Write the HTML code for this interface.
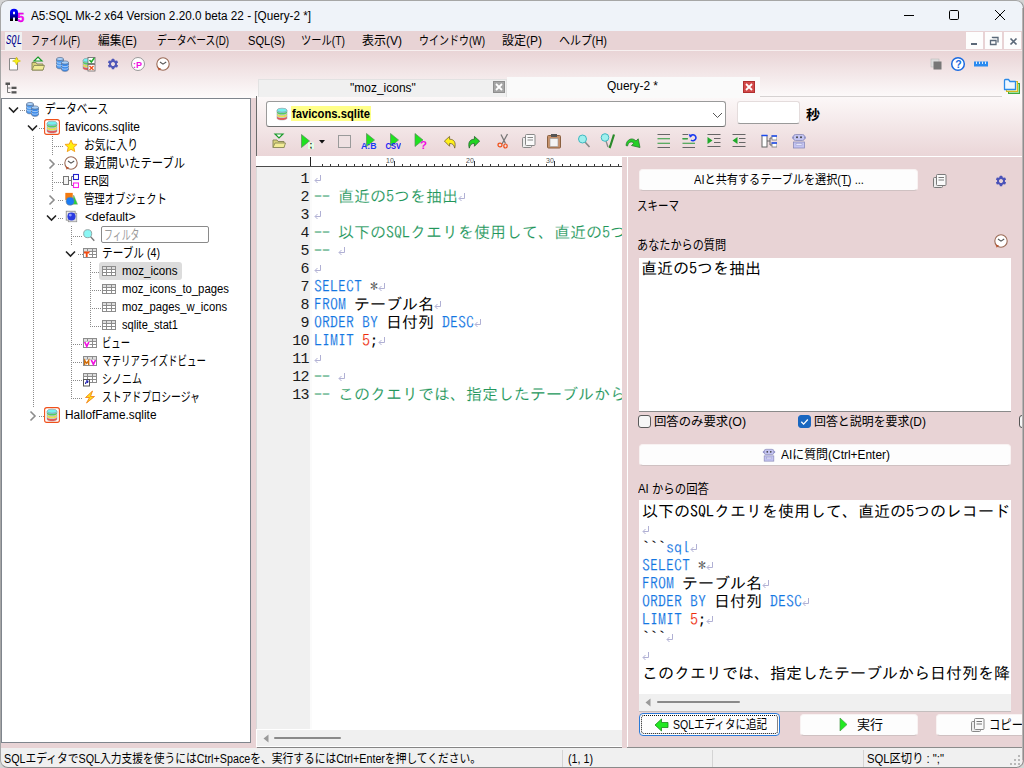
<!DOCTYPE html>
<html lang="ja">
<head>
<meta charset="utf-8">
<title>A5:SQL Mk-2</title>
<style>
*{box-sizing:border-box;margin:0;padding:0}
html,body{width:1024px;height:768px;overflow:hidden;background:#e8d3d5}
body{font-family:"Liberation Sans","Noto Sans CJK JP",sans-serif;font-size:12px;color:#000;position:relative}
#app{position:absolute;left:0;top:0;width:1024px;height:768px;overflow:hidden;background:#e8d3d5}
#app div,#app svg{position:absolute}
.t{white-space:pre;transform-origin:0 50%}
.mono{font-family:"IPAGothic","Liberation Mono",monospace}
.mono span{position:static}
#app svg.r{position:static;display:inline-block;vertical-align:top}
.mono .c,.mono .k,.mono .n{-webkit-text-stroke:0.12px #fff}
.dv{width:1px;background-image:linear-gradient(#8a8a8a 50%,transparent 50%);background-size:1px 2px}
.dh{height:1px;background-image:linear-gradient(90deg,#8a8a8a 50%,transparent 50%);background-size:2px 1px}
.c{color:#22965a}.k{color:#1476e2}.n{color:#ee2c0c}.g{color:#555}
.btn{background:#fdfdfd;border:1px solid #f8f2f2;border-bottom-color:#cfc1c2;border-radius:4px}
.ln{left:257px;width:52px;text-align:right;font-family:"Liberation Mono",monospace;font-size:15px;letter-spacing:-0.6px;line-height:18px;height:18px;color:#1a1a1a;white-space:nowrap}

</style>
</head>
<body>
<div id="app">
<div style="left:0px;top:0px;width:1024px;height:31px;background:#eff3f9"></div>
<svg style="left:8px;top:6px" width="18" height="18" viewBox="0 0 18 18"><linearGradient id="a5g" x1="0" y1="0" x2="0" y2="1"><stop offset="0" stop-color="#0000ff"/><stop offset="0.35" stop-color="#0000e8"/><stop offset="0.75" stop-color="#000070"/><stop offset="0.88" stop-color="#000"/></linearGradient><path fill-rule="evenodd" d="M2 15V6.2Q2 2.7 6 2.7Q10 2.7 10 6.2V15H7V11.5H5V15ZM5 5.8H7V8.3H5Z" fill="url(#a5g)"/><text x="9.3" y="15.8" font-family="Liberation Sans,sans-serif" font-weight="bold" font-size="12.5" fill="#ff00ff" stroke="#c000c0" stroke-width="0.3">5</text></svg>
<div class="t" style="left:31px;top:6.5px;font-size:12px;line-height:18px;height:18px;transform:scaleX(0.978);">A5:SQL Mk-2 x64 Version 2.20.0 beta 22 - [Query-2 *]</div>
<svg style="left:903px;top:10px" width="12" height="12" viewBox="0 0 12 12"><path d="M1 5.5h10" stroke="#000" stroke-width="1" fill="none"/></svg>
<svg style="left:948px;top:9px" width="12" height="12" viewBox="0 0 12 12"><rect x="1.5" y="1.5" width="9" height="9" rx="1.2" stroke="#000" stroke-width="1" fill="none"/></svg>
<svg style="left:994px;top:9px" width="12" height="12" viewBox="0 0 12 12"><path d="M1 1l10 10M11 1L1 11" stroke="#000" stroke-width="1" fill="none"/></svg>
<div style="left:0px;top:31px;width:1024px;height:20px;background:#e8d3d5"></div>
<div style="left:5px;top:32px;width:17px;height:18px;background:#f0f0f0"></div>
<div class="t" style="left:5.5px;top:32px;font-size:12.5px;line-height:18px;height:18px;font-family:'Liberation Mono',monospace;transform:scaleX(0.711);font-style:italic;color:#00008c;">SQL</div>
<div class="t" style="left:31px;top:31.5px;font-size:12.5px;line-height:18px;height:18px;transform:scaleX(0.743);">ファイル(F)</div>
<div class="t" style="left:98px;top:31.5px;font-size:12.5px;line-height:18px;height:18px;transform:scaleX(0.936);">編集(E)</div>
<div class="t" style="left:157px;top:31.5px;font-size:12.5px;line-height:18px;height:18px;transform:scaleX(0.785);">データベース(D)</div>
<div class="t" style="left:248px;top:31.5px;font-size:12.5px;line-height:18px;height:18px;transform:scaleX(0.888);">SQL(S)</div>
<div class="t" style="left:301px;top:31.5px;font-size:12.5px;line-height:18px;height:18px;transform:scaleX(0.823);">ツール(T)</div>
<div class="t" style="left:362px;top:31.5px;font-size:12.5px;line-height:18px;height:18px;transform:scaleX(0.960);">表示(V)</div>
<div class="t" style="left:419px;top:31.5px;font-size:12.5px;line-height:18px;height:18px;transform:scaleX(0.799);">ウインドウ(W)</div>
<div class="t" style="left:502px;top:31.5px;font-size:12.5px;line-height:18px;height:18px;transform:scaleX(0.960);">設定(P)</div>
<div class="t" style="left:559px;top:31.5px;font-size:12.5px;line-height:18px;height:18px;transform:scaleX(0.875);">ヘルプ(H)</div>
<div style="left:966px;top:32px;width:17px;height:17px;background:#fdfdfd"></div>
<div style="left:985px;top:32px;width:17px;height:17px;background:#fdfdfd"></div>
<div style="left:1004px;top:32px;width:17px;height:17px;background:#fdfdfd"></div>
<svg style="left:966px;top:32px" width="56" height="17" viewBox="0 0 56 17"><path d="M5 12h6" stroke="#5a6878" stroke-width="2" fill="none"/><path d="M24.5 8.5h5.5v4h-5.5z" stroke="#5a6878" stroke-width="1.3" fill="none"/><path d="M26.5 6v-.500h5.5v5" stroke="#5a6878" stroke-width="1.3" fill="none"/><path d="M44.5 6.5l6 6M50.5 6.5l-6 6" stroke="#5a6878" stroke-width="1.7" fill="none"/></svg>
<div style="left:0px;top:50px;width:1024px;height:1px;background:#f7f0f0"></div>
<div style="left:0px;top:51px;width:1024px;height:47px;background:linear-gradient(#e9d4d6,#fdfbfb)"></div>
<svg style="left:6px;top:56px" width="16" height="16" viewBox="0 0 16 16"><path d="M3.5 2.5h8v11.5h-8z" fill="#fff" stroke="#888" stroke-width="1"/><path d="M10.5 1l1.2 2.8 2.8 1.2-2.8 1.2-1.2 2.8-1.2-2.8L6.5 5l2.8-1.2z" fill="#f6f01a" stroke="#c8b400" stroke-width="0.5"/></svg>
<svg style="left:30px;top:56px" width="16" height="16" viewBox="0 0 16 16"><path d="M8 1l4 4H4z" fill="#fff" stroke="#1a9a2a" stroke-width="1.2"/><path d="M2 14V6.5h4l1 1.5h6V14z" fill="#d8d27a" stroke="#8a8a5a" stroke-width="1"/><path d="M2 14l2-4.5h10.5L13 14z" fill="#f2ec96" stroke="#8a8a5a" stroke-width="0.9"/></svg>
<svg style="left:55px;top:56px" width="16" height="16" viewBox="0 0 16 16"><g stroke="#5a6f8f" stroke-width="0.7"><path d="M1.5 3v8c0 2.4 7 2.4 7 0V3" fill="#4f9bf0"/><ellipse cx="5" cy="3" rx="3.5" ry="1.6" fill="#a9d1fa"/><path d="M1.5 5.6c0 2.2 7 2.2 7 0M1.5 8.3c0 2.2 7 2.2 7 0" fill="none" stroke="#d6e8fb"/><path d="M6.5 6.5v7c0 2.4 7 2.4 7 0v-7" fill="#3d8bea"/><ellipse cx="10" cy="6.5" rx="3.5" ry="1.6" fill="#a9d1fa"/><path d="M6.5 9c0 2.2 7 2.2 7 0M6.5 11.5c0 2.2 7 2.2 7 0" fill="none" stroke="#d6e8fb"/></g></svg>
<svg style="left:80px;top:56px" width="16" height="16" viewBox="0 0 16 16"><path d="M3 10.3v1.9c0 2.4 10 2.4 10 0v-1.9c0 2.4-10 2.4-10 0z" fill="#f4484a" stroke="#9aa0a4" stroke-width="0.5"/><path d="M3 7.6v1.9c0 2.4 10 2.4 10 0v-1.9c0 2.4-10 2.4-10 0z" fill="#f6ee3c" stroke="#9aa0a4" stroke-width="0.5"/><path d="M3 4.9v1.9c0 2.4 10 2.4 10 0v-1.9c0 2.4-10 2.4-10 0z" fill="#3fdc4c" stroke="#9aa0a4" stroke-width="0.5"/><path d="M3 4.3v.800c0 2.4 10 2.4 10 0v-.800z" fill="#5fe6e6" stroke="#9aa0a4" stroke-width="0.5"/><ellipse cx="8" cy="4.2" rx="5" ry="2" fill="#74f0f0" stroke="#8a9298" stroke-width="0.6"/><rect x="8" y="1.5" width="7" height="6" fill="#fff" stroke="#666" stroke-width="0.8"/><path d="M9.5 4l1.8 2 3-4" stroke="#1faa2a" stroke-width="1.5" fill="none"/><rect x="8" y="8.5" width="7" height="6.5" fill="#fff" stroke="#666" stroke-width="0.8"/><path d="M9.5 10l4 4M13.5 10l-4 4" stroke="#f0501a" stroke-width="1.3"/></svg>
<svg style="left:107px;top:58px" width="12" height="12" viewBox="0 0 16 16"><g transform="translate(8 8)"><rect x="-1.7" y="-7" width="3.4" height="4" rx="0.5" fill="#5058b8" transform="rotate(0)"/><rect x="-1.7" y="-7" width="3.4" height="4" rx="0.5" fill="#5058b8" transform="rotate(60)"/><rect x="-1.7" y="-7" width="3.4" height="4" rx="0.5" fill="#5058b8" transform="rotate(120)"/><rect x="-1.7" y="-7" width="3.4" height="4" rx="0.5" fill="#5058b8" transform="rotate(180)"/><rect x="-1.7" y="-7" width="3.4" height="4" rx="0.5" fill="#5058b8" transform="rotate(240)"/><rect x="-1.7" y="-7" width="3.4" height="4" rx="0.5" fill="#5058b8" transform="rotate(300)"/><circle r="4" fill="none" stroke="#5058b8" stroke-width="2.6"/></g></svg>
<svg style="left:130px;top:56px" width="16" height="16" viewBox="0 0 16 16"><circle cx="8" cy="8" r="6.5" fill="#fff" stroke="#999" stroke-width="1"/><text x="3" y="11.5" font-family="Liberation Sans,sans-serif" font-weight="bold" font-size="9" fill="#f010e0">:P</text></svg>
<svg style="left:155px;top:56px" width="16" height="16" viewBox="0 0 16 16"><circle cx="8" cy="8" r="6.2" fill="#fff" stroke="#9a6a55" stroke-width="1.1"/><path d="M5 6l3 2.2 3.2-2.2" fill="none" stroke="#555" stroke-width="1.1"/><path d="M2.5 11.5l1.2 3.3 2.3-2.3z" fill="#b5522c"/></svg>
<svg style="left:928px;top:56px" width="16" height="16" viewBox="0 0 16 16"><rect x="3" y="3" width="8" height="8" fill="#ddd" stroke="#bbb" stroke-width="0.6"/><rect x="5.5" y="5.5" width="8" height="8" fill="#777"/></svg>
<svg style="left:950px;top:56px" width="16" height="16" viewBox="0 0 16 16"><circle cx="8" cy="8" r="6.3" fill="#fff" stroke="#1a6ae0" stroke-width="1.5"/><text x="5.2" y="12" font-family="Liberation Sans,sans-serif" font-weight="bold" font-size="10.5" fill="#1a6ae0">?</text></svg>
<svg style="left:973px;top:56px" width="16" height="16" viewBox="0 0 16 16"><rect x="1" y="5.5" width="14" height="5" fill="#2a8af0"/><path d="M3.5 5.5v2.5M6.5 5.5v2.5M9.5 5.5v2.5M12.5 5.5v2.5" stroke="#d8ecff" stroke-width="1"/></svg>
<svg style="left:5px;top:82px" width="12" height="12" viewBox="0 0 12 12"><rect x="0.5" y="0.5" width="4.5" height="2.5" fill="#555"/><path d="M2.5 3v7.5h3M2.5 6h3" stroke="#777" stroke-width="1" fill="none"/><rect x="6.5" y="4.7" width="5" height="2.3" fill="#555"/><rect x="6.5" y="9.2" width="5" height="2.3" fill="#555"/></svg>
<div style="left:1px;top:98px;width:250px;height:645px;background:#fff;border:1px solid #7f858d"></div>
<div class="dv" style="left:33px;top:118px;height:290px"></div>
<div class="dv" style="left:52px;top:136px;height:75px"></div>
<div class="dv" style="left:71px;top:226px;height:172px"></div>
<div class="dv" style="left:90px;top:262px;height:64px"></div>
<div class="dh" style="left:20px;top:110px;width:5px"></div>
<div class="dh" style="left:39px;top:128px;width:5px"></div>
<div class="dh" style="left:39px;top:416px;width:5px"></div>
<div class="dh" style="left:52px;top:146px;width:11px"></div>
<div class="dh" style="left:58px;top:164px;width:5px"></div>
<div class="dh" style="left:52px;top:182px;width:11px"></div>
<div class="dh" style="left:58px;top:200px;width:5px"></div>
<div class="dh" style="left:58px;top:218px;width:5px"></div>
<div class="dh" style="left:71px;top:236px;width:12px"></div>
<div class="dh" style="left:78px;top:254px;width:5px"></div>
<div class="dh" style="left:90px;top:272px;width:11px"></div>
<div class="dh" style="left:90px;top:290px;width:11px"></div>
<div class="dh" style="left:90px;top:308px;width:11px"></div>
<div class="dh" style="left:90px;top:326px;width:11px"></div>
<div class="dh" style="left:71px;top:344px;width:12px"></div>
<div class="dh" style="left:71px;top:362px;width:12px"></div>
<div class="dh" style="left:71px;top:380px;width:12px"></div>
<div class="dh" style="left:71px;top:398px;width:12px"></div>
<svg style="left:8px;top:101.5px" width="11" height="15" viewBox="0 0 11 15"><rect width="11" height="15" fill="#fff"/><path d="M1 5.5l4.5 4.5 4.5-4.5" fill="none" stroke="#222" stroke-width="1.6"/></svg>
<svg style="left:27px;top:119.5px" width="11" height="15" viewBox="0 0 11 15"><rect width="11" height="15" fill="#fff"/><path d="M1 5.5l4.5 4.5 4.5-4.5" fill="none" stroke="#222" stroke-width="1.6"/></svg>
<svg style="left:48px;top:155.5px" width="9" height="16" viewBox="0 0 9 16"><rect width="9" height="16" fill="#fff"/><path d="M1.5 3.5l4.5 4.5-4.5 4.5" fill="none" stroke="#8c8c8c" stroke-width="1.6"/></svg>
<svg style="left:48px;top:191.5px" width="9" height="16" viewBox="0 0 9 16"><rect width="9" height="16" fill="#fff"/><path d="M1.5 3.5l4.5 4.5-4.5 4.5" fill="none" stroke="#8c8c8c" stroke-width="1.6"/></svg>
<svg style="left:46px;top:209.5px" width="11" height="15" viewBox="0 0 11 15"><rect width="11" height="15" fill="#fff"/><path d="M1 5.5l4.5 4.5 4.5-4.5" fill="none" stroke="#222" stroke-width="1.6"/></svg>
<svg style="left:65px;top:245.5px" width="11" height="15" viewBox="0 0 11 15"><rect width="11" height="15" fill="#fff"/><path d="M1 5.5l4.5 4.5 4.5-4.5" fill="none" stroke="#222" stroke-width="1.6"/></svg>
<svg style="left:29px;top:407.5px" width="9" height="16" viewBox="0 0 9 16"><rect width="9" height="16" fill="#fff"/><path d="M1.5 3.5l4.5 4.5-4.5 4.5" fill="none" stroke="#8c8c8c" stroke-width="1.6"/></svg>
<div style="left:99px;top:262px;width:83px;height:18px;background:#dcdcdc;border-radius:3px"></div>
<svg style="left:25px;top:101px" width="16" height="16" viewBox="0 0 16 16"><g stroke="#5a6f8f" stroke-width="0.7"><path d="M1.5 3v8c0 2.4 7 2.4 7 0V3" fill="#4f9bf0"/><ellipse cx="5" cy="3" rx="3.5" ry="1.6" fill="#a9d1fa"/><path d="M1.5 5.6c0 2.2 7 2.2 7 0M1.5 8.3c0 2.2 7 2.2 7 0" fill="none" stroke="#d6e8fb"/><path d="M6.5 6.5v7c0 2.4 7 2.4 7 0v-7" fill="#3d8bea"/><ellipse cx="10" cy="6.5" rx="3.5" ry="1.6" fill="#a9d1fa"/><path d="M6.5 9c0 2.2 7 2.2 7 0M6.5 11.5c0 2.2 7 2.2 7 0" fill="none" stroke="#d6e8fb"/></g></svg>
<svg style="left:44px;top:119px" width="16" height="16" viewBox="0 0 16 16"><rect x="0.6" y="0.6" width="14.8" height="14.8" rx="2.2" fill="#fff" stroke="#f0501a" stroke-width="1.1"/><path d="M3 10.3v1.9c0 2.4 10 2.4 10 0v-1.9c0 2.4-10 2.4-10 0z" fill="#f4484a" stroke="#9aa0a4" stroke-width="0.5"/><path d="M3 7.6v1.9c0 2.4 10 2.4 10 0v-1.9c0 2.4-10 2.4-10 0z" fill="#f6ee3c" stroke="#9aa0a4" stroke-width="0.5"/><path d="M3 4.9v1.9c0 2.4 10 2.4 10 0v-1.9c0 2.4-10 2.4-10 0z" fill="#3fdc4c" stroke="#9aa0a4" stroke-width="0.5"/><path d="M3 4.3v.800c0 2.4 10 2.4 10 0v-.800z" fill="#5fe6e6" stroke="#9aa0a4" stroke-width="0.5"/><ellipse cx="8" cy="4.2" rx="5" ry="2" fill="#74f0f0" stroke="#8a9298" stroke-width="0.6"/></svg>
<svg style="left:64px;top:138.5px" width="14" height="14" viewBox="0 0 16 16"><path d="M8 1.2l2 4.6 4.9.4-3.7 3.3 1.1 4.9L8 11.8l-4.3 2.6 1.1-4.9L1.1 6.2l4.9-.4z" fill="#ffee10" stroke="#f59a12" stroke-width="1"/></svg>
<svg style="left:63px;top:155px" width="16" height="16" viewBox="0 0 16 16"><circle cx="8" cy="8" r="6.2" fill="#fff" stroke="#9a6a55" stroke-width="1.1"/><path d="M5 6l3 2.2 3.2-2.2" fill="none" stroke="#555" stroke-width="1.1"/><path d="M2.5 11.5l1.2 3.3 2.3-2.3z" fill="#b5522c"/></svg>
<svg style="left:63px;top:173px" width="16" height="16" viewBox="0 0 16 16"><rect x="0.5" y="3.5" width="5" height="8" fill="#f4f4f4" stroke="#777" stroke-width="1"/><path d="M5.5 7.5h3M8.5 3.5v9M8.5 3.5h2M8.5 12.5h2" stroke="#777" fill="none" stroke-width="1"/><rect x="10.5" y="1.5" width="5" height="5" fill="#fff" stroke="#2222cc" stroke-width="1.1"/><rect x="10.5" y="10" width="5" height="4.5" fill="#fff" stroke="#ff22ee" stroke-width="1.1"/></svg>
<svg style="left:64px;top:192px" width="14" height="14" viewBox="0 0 16 16"><rect x="1.5" y="1" width="8.5" height="8" fill="#f47a10"/><path d="M11 3.5l4.5 10.5h-6z" fill="#22dd33" stroke="#8a8a8a" stroke-width="0.5"/><circle cx="7" cy="10.5" r="4.6" fill="#1a7cf4" stroke="#7a8088" stroke-width="0.7"/></svg>
<svg style="left:64.5px;top:210px" width="13" height="13" viewBox="0 0 16 16"><rect x="1.5" y="1.5" width="11" height="11" fill="#eee" stroke="#888" stroke-width="1"/><rect x="4" y="4" width="10.5" height="10.5" fill="#ddd" stroke="#888" stroke-width="0.8"/><circle cx="8" cy="8" r="5" fill="#2a3be0"/><circle cx="6.5" cy="6.3" r="1.8" fill="#8f9bff"/></svg>
<svg style="left:82px;top:228px" width="14" height="14" viewBox="0 0 16 16"><path d="M9 9l5 5.5" stroke="#777" stroke-width="1.6"/><circle cx="6.5" cy="6.5" r="4.6" fill="#8af6f4" stroke="#8a9a9a" stroke-width="1"/></svg>
<div style="left:101px;top:226px;width:108px;height:17px;background:#fff;border:1px solid #8a8a8a;border-radius:2px"></div>
<svg style="left:82px;top:245px" width="16" height="16" viewBox="0 0 16 16"><rect x="1.5" y="3.5" width="13" height="9" fill="#fff" stroke="#8c8c8c" stroke-width="1"/><rect x="2" y="4" width="12" height="2.5" fill="#dedede"/><path d="M1.5 6.5h13" stroke="#8c8c8c" stroke-width="1"/><path d="M1.5 9.5h13" stroke="#8c8c8c" stroke-width="1"/><path d="M5.5 3.5v9" stroke="#8c8c8c" stroke-width="1"/><path d="M10.5 3.5v9" stroke="#8c8c8c" stroke-width="1"/><rect x="2" y="6.5" width="5" height="5.5" fill="#fff"/><path d="M2 7.5h5.5M4.7 7.5v4.5" stroke="#f24a10" stroke-width="1.9"/></svg>
<svg style="left:101px;top:263px" width="16" height="16" viewBox="0 0 16 16"><rect x="1.5" y="3.5" width="13" height="9" fill="#fff" stroke="#8c8c8c" stroke-width="1"/><rect x="2" y="4" width="12" height="2.5" fill="#dedede"/><path d="M1.5 6.5h13" stroke="#8c8c8c" stroke-width="1"/><path d="M1.5 9.5h13" stroke="#8c8c8c" stroke-width="1"/><path d="M5.5 3.5v9" stroke="#8c8c8c" stroke-width="1"/><path d="M10.5 3.5v9" stroke="#8c8c8c" stroke-width="1"/></svg>
<svg style="left:101px;top:281px" width="16" height="16" viewBox="0 0 16 16"><rect x="1.5" y="3.5" width="13" height="9" fill="#fff" stroke="#8c8c8c" stroke-width="1"/><rect x="2" y="4" width="12" height="2.5" fill="#dedede"/><path d="M1.5 6.5h13" stroke="#8c8c8c" stroke-width="1"/><path d="M1.5 9.5h13" stroke="#8c8c8c" stroke-width="1"/><path d="M5.5 3.5v9" stroke="#8c8c8c" stroke-width="1"/><path d="M10.5 3.5v9" stroke="#8c8c8c" stroke-width="1"/></svg>
<svg style="left:101px;top:299px" width="16" height="16" viewBox="0 0 16 16"><rect x="1.5" y="3.5" width="13" height="9" fill="#fff" stroke="#8c8c8c" stroke-width="1"/><rect x="2" y="4" width="12" height="2.5" fill="#dedede"/><path d="M1.5 6.5h13" stroke="#8c8c8c" stroke-width="1"/><path d="M1.5 9.5h13" stroke="#8c8c8c" stroke-width="1"/><path d="M5.5 3.5v9" stroke="#8c8c8c" stroke-width="1"/><path d="M10.5 3.5v9" stroke="#8c8c8c" stroke-width="1"/></svg>
<svg style="left:101px;top:317px" width="16" height="16" viewBox="0 0 16 16"><rect x="1.5" y="3.5" width="13" height="9" fill="#fff" stroke="#8c8c8c" stroke-width="1"/><rect x="2" y="4" width="12" height="2.5" fill="#dedede"/><path d="M1.5 6.5h13" stroke="#8c8c8c" stroke-width="1"/><path d="M1.5 9.5h13" stroke="#8c8c8c" stroke-width="1"/><path d="M5.5 3.5v9" stroke="#8c8c8c" stroke-width="1"/><path d="M10.5 3.5v9" stroke="#8c8c8c" stroke-width="1"/></svg>
<svg style="left:82px;top:335px" width="16" height="16" viewBox="0 0 16 16"><rect x="1.5" y="3.5" width="13" height="9" fill="#fff" stroke="#8c8c8c" stroke-width="1"/><rect x="2" y="4" width="12" height="2.5" fill="#dedede"/><path d="M1.5 6.5h13" stroke="#8c8c8c" stroke-width="1"/><path d="M1.5 9.5h13" stroke="#8c8c8c" stroke-width="1"/><path d="M5.5 3.5v9" stroke="#8c8c8c" stroke-width="1"/><path d="M10.5 3.5v9" stroke="#8c8c8c" stroke-width="1"/><rect x="2" y="6.5" width="5.5" height="5.5" fill="#fff"/><path d="M2.7 7l2.1 4.3L6.9 7" stroke="#f010e0" stroke-width="1.7" fill="none"/></svg>
<svg style="left:82px;top:353px" width="16" height="16" viewBox="0 0 16 16"><rect x="1.5" y="3.5" width="13" height="9" fill="#fff" stroke="#8c8c8c" stroke-width="1"/><rect x="2" y="4" width="12" height="2.5" fill="#dedede"/><path d="M1.5 6.5h13" stroke="#8c8c8c" stroke-width="1"/><path d="M1.5 9.5h13" stroke="#8c8c8c" stroke-width="1"/><path d="M5.5 3.5v9" stroke="#8c8c8c" stroke-width="1"/><path d="M10.5 3.5v9" stroke="#8c8c8c" stroke-width="1"/><rect x="2" y="6.5" width="12" height="5.5" fill="#fff"/><path d="M2.7 12V7.5l2 2.8 2-2.8V12" stroke="#d07010" stroke-width="1.4" fill="none"/><path d="M9.3 7l2.1 4.3L13.5 7" stroke="#f010e0" stroke-width="1.7" fill="none"/></svg>
<svg style="left:82px;top:371px" width="16" height="16" viewBox="0 0 16 16"><rect x="1.5" y="2.5" width="13" height="9" fill="#fff" stroke="#8c8c8c" stroke-width="1"/><rect x="2" y="3" width="12" height="2.5" fill="#dedede"/><path d="M1.5 5.5h13" stroke="#8c8c8c" stroke-width="1"/><path d="M1.5 8.5h13" stroke="#8c8c8c" stroke-width="1"/><path d="M5.5 2.5v9" stroke="#8c8c8c" stroke-width="1"/><path d="M10.5 2.5v9" stroke="#8c8c8c" stroke-width="1"/><rect x="1.5" y="8.5" width="6" height="6.5" fill="#fff" stroke="#555" stroke-width="1"/><path d="M3.5 13c0-2 1-2.5 2.5-2.5M6.3 10.3l-2-.8M6.3 10.3l-1 1.8" stroke="#2020b0" stroke-width="1.1" fill="none"/></svg>
<svg style="left:82px;top:389px" width="16" height="16" viewBox="0 0 16 16"><path d="M10.5 2L3.5 8.5h4L4.5 14l8-6.5h-4z" fill="#ffdc1a" stroke="#f0780c" stroke-width="0.8"/></svg>
<svg style="left:44px;top:407px" width="16" height="16" viewBox="0 0 16 16"><rect x="0.6" y="0.6" width="14.8" height="14.8" rx="2.2" fill="#fff" stroke="#f0501a" stroke-width="1.1"/><path d="M3 10.3v1.9c0 2.4 10 2.4 10 0v-1.9c0 2.4-10 2.4-10 0z" fill="#f4484a" stroke="#9aa0a4" stroke-width="0.5"/><path d="M3 7.6v1.9c0 2.4 10 2.4 10 0v-1.9c0 2.4-10 2.4-10 0z" fill="#f6ee3c" stroke="#9aa0a4" stroke-width="0.5"/><path d="M3 4.9v1.9c0 2.4 10 2.4 10 0v-1.9c0 2.4-10 2.4-10 0z" fill="#3fdc4c" stroke="#9aa0a4" stroke-width="0.5"/><path d="M3 4.3v.800c0 2.4 10 2.4 10 0v-.800z" fill="#5fe6e6" stroke="#9aa0a4" stroke-width="0.5"/><ellipse cx="8" cy="4.2" rx="5" ry="2" fill="#74f0f0" stroke="#8a9298" stroke-width="0.6"/></svg>
<div class="t" style="left:45.3px;top:99.5px;font-size:13px;line-height:18px;height:18px;transform:scaleX(0.814);">データベース</div>
<div class="t" style="left:65.3px;top:117.5px;font-size:12px;line-height:18px;height:18px;transform:scaleX(0.995);">favicons.sqlite</div>
<div class="t" style="left:84.3px;top:135.5px;font-size:13px;line-height:18px;height:18px;transform:scaleX(0.831);">お気に入り</div>
<div class="t" style="left:84.3px;top:153.5px;font-size:13px;line-height:18px;height:18px;transform:scaleX(0.869);">最近開いたテーブル</div>
<div class="t" style="left:84.3px;top:171.5px;font-size:13px;line-height:18px;height:18px;transform:scaleX(0.805);">ER図</div>
<div class="t" style="left:84.3px;top:189.5px;font-size:13px;line-height:18px;height:18px;transform:scaleX(0.798);">管理オブジェクト</div>
<div class="t" style="left:84.8px;top:207.5px;font-size:12px;line-height:18px;height:18px;transform:scaleX(1.009);">&lt;default&gt;</div>
<div class="t" style="left:102.3px;top:243.5px;font-size:13px;line-height:18px;height:18px;transform:scaleX(0.820);">テーブル (4)</div>
<div class="t" style="left:122.3px;top:261.5px;font-size:12px;line-height:18px;height:18px;transform:scaleX(0.968);">moz_icons</div>
<div class="t" style="left:122.3px;top:279.5px;font-size:12px;line-height:18px;height:18px;transform:scaleX(0.943);">moz_icons_to_pages</div>
<div class="t" style="left:122.3px;top:297.5px;font-size:12px;line-height:18px;height:18px;transform:scaleX(0.937);">moz_pages_w_icons</div>
<div class="t" style="left:122.3px;top:315.5px;font-size:12px;line-height:18px;height:18px;transform:scaleX(0.923);">sqlite_stat1</div>
<div class="t" style="left:102.3px;top:333.5px;font-size:13px;line-height:18px;height:18px;transform:scaleX(0.718);">ビュー</div>
<div class="t" style="left:102.3px;top:351.5px;font-size:13px;line-height:18px;height:18px;transform:scaleX(0.729);">マテリアライズドビュー</div>
<div class="t" style="left:102.3px;top:369.5px;font-size:13px;line-height:18px;height:18px;transform:scaleX(0.769);">シノニム</div>
<div class="t" style="left:102.3px;top:387.5px;font-size:13px;line-height:18px;height:18px;transform:scaleX(0.759);">ストアドプロシージャ</div>
<div class="t" style="left:65.3px;top:405.5px;font-size:12px;line-height:18px;height:18px;transform:scaleX(0.987);">HallofFame.sqlite</div>
<div class="t" style="left:104px;top:225.5px;font-size:13px;line-height:18px;height:18px;transform:scaleX(0.686);color:#9a9a9a;">フィルタ</div>
<div style="left:0px;top:748px;width:1024px;height:20px;background:#f0f0f0"></div>
<div class="t" style="left:4px;top:749.5px;font-size:12.5px;line-height:18px;height:18px;transform:scaleX(0.860);">SQLエディタでSQL入力支援を使うにはCtrl+Spaceを、実行するにはCtrl+Enterを押してください。</div>
<div class="t" style="left:568px;top:749.5px;font-size:12px;line-height:18px;height:18px;transform:scaleX(0.892);">(1, 1)</div>
<div class="t" style="left:867px;top:749.5px;font-size:12.5px;line-height:18px;height:18px;transform:scaleX(0.903);">SQL区切り : ";"</div>
<div style="left:562px;top:750px;width:1px;height:17px;background:#d4d4d4"></div>
<div style="left:712px;top:750px;width:1px;height:17px;background:#d4d4d4"></div>
<div style="left:863px;top:750px;width:1px;height:17px;background:#d4d4d4"></div>
<div style="left:257px;top:97px;width:767px;height:60px;background:linear-gradient(#fcf8f8,#ead5d7)"></div>
<div style="left:256px;top:96px;width:1px;height:60px;background:#6a6a6a"></div>
<div style="left:258px;top:79px;width:249px;height:18px;background:#f0f0f0;border:1px solid #e2e2e2;border-bottom:none"></div>
<div class="t" style="left:350px;top:79px;font-size:12px;line-height:18px;height:18px;">"moz_icons"</div>
<div style="left:493px;top:81px;width:12px;height:12px;background:#a6a6a6;border:1px solid #8e8e8e"></div>
<svg style="left:493px;top:81px" width="12" height="12" viewBox="0 0 12 12"><path d="M3 3l6 6M9 3l-6 6" stroke="#fff" stroke-width="1.8"/></svg>
<div style="left:507px;top:77px;width:253px;height:21px;background:#fafafa"></div>
<div class="t" style="left:607px;top:77px;font-size:12px;line-height:18px;height:18px;transform:scaleX(0.993);">Query-2 *</div>
<div style="left:743px;top:81px;width:12px;height:12px;background:#d24a4a;border:1px solid #b03030"></div>
<svg style="left:743px;top:81px" width="12" height="12" viewBox="0 0 12 12"><path d="M3 3l6 6M9 3l-6 6" stroke="#fff" stroke-width="1.8"/></svg>
<div style="left:760px;top:96px;width:242px;height:1px;background:#d6d2d2"></div>
<svg style="left:1003px;top:77px" width="18" height="18" viewBox="0 0 18 18"><rect x="5.5" y="6.5" width="11" height="10" fill="#9fe29f" stroke="#3fa83f"/><rect x="3.5" y="4.5" width="11" height="10" fill="#fdf3a0" stroke="#d8b820"/><path d="M1.5 4.5v8h11v-8h-5.5l-1.5-2h-3q-1 0-1 1z" fill="#eef7ff" stroke="#2a8ae8" stroke-width="1.3" stroke-linejoin="round"/></svg>
<div style="left:266px;top:101px;width:460px;height:26px;background:#fff;border:1px solid #9a9a9a;border-bottom-color:#6e6e6e;border-radius:3px"></div>
<svg style="left:274px;top:106px" width="16" height="16" viewBox="0 0 16 16"><path d="M3 10.3v1.9c0 2.4 10 2.4 10 0v-1.9c0 2.4-10 2.4-10 0z" fill="#f4484a" stroke="#9aa0a4" stroke-width="0.5"/><path d="M3 7.6v1.9c0 2.4 10 2.4 10 0v-1.9c0 2.4-10 2.4-10 0z" fill="#f6ee3c" stroke="#9aa0a4" stroke-width="0.5"/><path d="M3 4.9v1.9c0 2.4 10 2.4 10 0v-1.9c0 2.4-10 2.4-10 0z" fill="#3fdc4c" stroke="#9aa0a4" stroke-width="0.5"/><path d="M3 4.3v.800c0 2.4 10 2.4 10 0v-.800z" fill="#5fe6e6" stroke="#9aa0a4" stroke-width="0.5"/><ellipse cx="8" cy="4.2" rx="5" ry="2" fill="#74f0f0" stroke="#8a9298" stroke-width="0.6"/></svg>
<div style="left:291px;top:106px;width:80px;height:15px;background:#ffff88"></div>
<div class="t" style="left:292px;top:105px;font-size:12px;line-height:18px;height:18px;transform:scaleX(0.936);font-weight:bold;">favicons.sqlite</div>
<svg style="left:712px;top:112px" width="11" height="7" viewBox="0 0 11 7"><path d="M1 1l4.5 4.5L10 1" fill="none" stroke="#555" stroke-width="1"/></svg>
<div style="left:737px;top:101px;width:63px;height:23px;background:#fff;border:1px solid #e4dcdc;border-bottom-color:#9a9a9a;border-radius:3px"></div>
<div class="t" style="left:806px;top:106px;font-size:13px;line-height:18px;height:18px;transform:scaleX(1.076);font-weight:bold;">秒</div>
<svg style="left:271px;top:133px" width="16" height="16" viewBox="0 0 16 16"><path d="M4 1h8l-4 4z" fill="#fff" stroke="#1a9a2a" stroke-width="1.2"/><path d="M2 14.5V7h4l1 1.5h6v6z" fill="#d8d27a" stroke="#8a8a5a"/><path d="M2 14.5l2-4.5h10.5L13 14.5z" fill="#f2ec96" stroke="#8a8a5a" stroke-width="0.9"/></svg>
<svg style="left:299px;top:133px" width="16" height="16" viewBox="0 0 16 16"><path d="M2.5 1.5v13l8-6.5z" fill="#1fe21f" stroke="#5a8a5a" stroke-width="0.7"/><rect x="9" y="9.5" width="6" height="6.5" fill="#e4ffe4"/><text x="10.6" y="15.3" font-family="Liberation Sans,sans-serif" font-weight="bold" font-size="8.5" fill="#111">;</text></svg>
<svg style="left:319px;top:140px" width="7" height="4" viewBox="0 0 7 4"><path d="M0 0h6l-3 3.5z" fill="#111"/></svg>
<div style="left:338px;top:135px;width:13px;height:13px;border:1px solid #9a9a9a;background:#efe1e2"></div>
<svg style="left:361px;top:133px" width="16" height="16" viewBox="0 0 16 16"><path d="M5.5 0.5v13l8-6.5z" fill="#1fe21f" stroke="#5a8a5a" stroke-width="0.7"/><text x="0" y="16" font-family="Liberation Sans,sans-serif" font-weight="bold" font-size="9.5" fill="#1a3af4" textLength="15.5" lengthAdjust="spacingAndGlyphs">A:B</text></svg>
<svg style="left:385px;top:133px" width="16" height="16" viewBox="0 0 16 16"><path d="M5.5 0.5v13l8-6.5z" fill="#1fe21f" stroke="#5a8a5a" stroke-width="0.7"/><text x="0.5" y="15.5" font-family="Liberation Sans,sans-serif" font-weight="bold" font-size="9.5" fill="#1a1af4" textLength="15.5" lengthAdjust="spacingAndGlyphs">CSV</text></svg>
<svg style="left:412px;top:133px" width="16" height="16" viewBox="0 0 16 16"><path d="M3 0.5v13l8-6.5z" fill="#1fe21f" stroke="#5a8a5a" stroke-width="0.7"/><text x="8" y="15.5" font-family="Liberation Sans,sans-serif" font-weight="bold" font-size="11.5" fill="#f010e0">?</text></svg>
<svg style="left:443px;top:134.5px" width="15" height="15" viewBox="0 0 16 16"><path d="M1.5 6.5L7 1.5v3c5 0 7 3.5 5.5 9.5-.800-3.5-2-5-5.5-5v3z" fill="#fff01a" stroke="#7a6a30" stroke-width="0.9"/></svg>
<svg style="left:466px;top:134.5px" width="15" height="15" viewBox="0 0 16 16"><path d="M14.5 6.5L9 1.5v3c-5 0-7 3.5-5.5 9.5.8-3.5 2-5 5.5-5v3z" fill="#22d422" stroke="#2a6a30" stroke-width="0.9"/></svg>
<svg style="left:496px;top:133px" width="16" height="16" viewBox="0 0 16 16"><path d="M11.5 1L6 11M5 1.5l4.5 9" stroke="#777" stroke-width="1.3"/><ellipse cx="4" cy="12" rx="2" ry="1.8" fill="none" stroke="#f0501a" stroke-width="1.2"/><ellipse cx="9.5" cy="13" rx="1.7" ry="2" fill="none" stroke="#f0501a" stroke-width="1.2"/></svg>
<svg style="left:521px;top:133px" width="16" height="16" viewBox="0 0 16 16"><rect x="1.5" y="4.5" width="9" height="10" rx="1" fill="#eee" stroke="#888"/><rect x="4.5" y="1.5" width="9.5" height="11" rx="1" fill="#fafafa" stroke="#888"/><path d="M6.5 4.5h5.5M6.5 7h5.5" stroke="#888"/></svg>
<svg style="left:546px;top:133px" width="16" height="16" viewBox="0 0 16 16"><rect x="1.5" y="2.5" width="13" height="12.5" rx="1" fill="#c8916a" stroke="#8a6040"/><rect x="5" y="1" width="6" height="3" fill="#555"/><rect x="4" y="5.5" width="8" height="8" fill="#f4f4f4" stroke="#999" stroke-width="0.6"/></svg>
<svg style="left:576px;top:133px" width="16" height="16" viewBox="0 0 16 16"><path d="M8.5 8.5l5 5.5" stroke="#888" stroke-width="1.6"/><circle cx="6.5" cy="6" r="4" fill="#9ff0ee" stroke="#3fb8c0"/></svg>
<svg style="left:600px;top:133px" width="16" height="16" viewBox="0 0 16 16"><path d="M6 8l2 6" stroke="#888" stroke-width="1.3"/><circle cx="5" cy="4.5" r="3.8" fill="#9ff0ee" stroke="#3fb8c0"/><path d="M14 1.5l-3.5 11-1 2.5" stroke="#2a8a2a" stroke-width="2.2"/></svg>
<svg style="left:625px;top:134px" width="16" height="16" viewBox="0 0 16 16"><path d="M1 11.5c.500-6.5 6.5-8.5 10-4.5l2.2-2.2 1.8 8.7-8.5-2 2.3-2.3c-2.5-2.5-5.3-1.2-6.3 2.8z" fill="#26d026" stroke="#2a7a30" stroke-width="0.8"/></svg>
<svg style="left:656px;top:133px" width="16" height="16" viewBox="0 0 16 16"><path d="M1.5 1.5h12.5M1.5 14.5h12.5" stroke="#666" stroke-width="1.1"/><path d="M1.5 5.8h12.5M1.5 10.2h12.5" stroke="#2a9a3a" stroke-width="1.1"/></svg>
<svg style="left:681px;top:133px" width="16" height="16" viewBox="0 0 16 16"><path d="M1.5 1.5h12.5M1.5 14.5h12.5" stroke="#666" stroke-width="1.1"/><path d="M1.5 5.8h12.5M1.5 10.2h12.5" stroke="#2a9a3a" stroke-width="1.1"/><rect x="7" y="0" width="9" height="8" fill="#efe0e1"/><path d="M1.5 5.8h5" stroke="#2a9a3a" stroke-width="1.1"/><path d="M9.5 3a3 3 0 1 1 .500 4" stroke="#1a3af0" stroke-width="1.6" fill="none"/><path d="M7.5 1l1.5 3.8 2.8-2.3z" fill="#1a3af0"/></svg>
<svg style="left:706px;top:132px" width="16" height="16" viewBox="0 0 16 16"><path d="M1.5 2.5h13M8 6.5h6.5M8 10.5h6.5M1.5 14.5h13" stroke="#666" stroke-width="1.1"/><path d="M1.5 5l5 3.5-5 3.5z" fill="#1faa2a"/></svg>
<svg style="left:731px;top:132px" width="16" height="16" viewBox="0 0 16 16"><path d="M1.5 2.5h13M8 6.5h6.5M8 10.5h6.5M1.5 14.5h13" stroke="#666" stroke-width="1.1"/><path d="M6.5 5l-5 3.5 5 3.5z" fill="#1faa2a"/></svg>
<svg style="left:761px;top:133px" width="16" height="16" viewBox="0 0 16 16"><rect x="1" y="2.5" width="5" height="11.5" fill="#fff" stroke="#666"/><path d="M0.5 2.5h6" stroke="#1a4af0" stroke-width="1.5"/><path d="M6 8h3M9 5v7M9 5h2M9 12h2" stroke="#666" fill="none"/><rect x="11" y="3" width="5" height="4" fill="#fff" stroke="#777" stroke-width="0.8"/><path d="M10.5 3h6" stroke="#1a4af0" stroke-width="1.5"/><rect x="11" y="10" width="5" height="4" fill="#fff" stroke="#777" stroke-width="0.8"/><path d="M10.5 10h6" stroke="#1a4af0" stroke-width="1.5"/></svg>
<svg style="left:791px;top:133px" width="16" height="16" viewBox="0 0 16 16"><rect x="1" y="3.5" width="14" height="2.2" fill="#9a9ad0"/><rect x="2.5" y="1.5" width="11" height="6" rx="2" fill="#c4c4f2" stroke="#8a8ab8" stroke-width="0.8"/><circle cx="6" cy="4.3" r="1" fill="#444"/><circle cx="10" cy="4.3" r="1" fill="#444"/><rect x="2.5" y="9" width="11" height="6" fill="#c4c4f2" stroke="#8a8ab8" stroke-width="0.8"/><rect x="5" y="10.5" width="6" height="2" fill="#e6e6fb" stroke="#9a9ac8" stroke-width="0.5"/></svg>
<div style="left:256px;top:156px;width:366px;height:11px;background:#fff"></div>
<div style="left:256px;top:166px;width:366px;height:1px;background:#4a4a4a"></div>
<div style="left:310px;top:157px;width:1px;height:9px;background:#222"></div>
<div style="left:322px;top:164px;width:1px;height:2px;background:#333"></div><div style="left:330px;top:164px;width:1px;height:2px;background:#333"></div><div style="left:338px;top:164px;width:1px;height:2px;background:#333"></div><div style="left:346px;top:164px;width:1px;height:2px;background:#333"></div><div style="left:354px;top:164px;width:1px;height:2px;background:#333"></div><div style="left:362px;top:164px;width:1px;height:2px;background:#333"></div><div style="left:370px;top:164px;width:1px;height:2px;background:#333"></div><div style="left:378px;top:164px;width:1px;height:2px;background:#333"></div><div style="left:386px;top:164px;width:1px;height:2px;background:#333"></div><div style="left:394px;top:161px;width:1px;height:5px;background:#333"></div><div style="left:402px;top:164px;width:1px;height:2px;background:#333"></div><div style="left:410px;top:164px;width:1px;height:2px;background:#333"></div><div style="left:418px;top:164px;width:1px;height:2px;background:#333"></div><div style="left:426px;top:164px;width:1px;height:2px;background:#333"></div><div style="left:434px;top:164px;width:1px;height:2px;background:#333"></div><div style="left:442px;top:164px;width:1px;height:2px;background:#333"></div><div style="left:450px;top:164px;width:1px;height:2px;background:#333"></div><div style="left:458px;top:164px;width:1px;height:2px;background:#333"></div><div style="left:466px;top:164px;width:1px;height:2px;background:#333"></div><div style="left:474px;top:161px;width:1px;height:5px;background:#333"></div><div style="left:482px;top:164px;width:1px;height:2px;background:#333"></div><div style="left:490px;top:164px;width:1px;height:2px;background:#333"></div><div style="left:498px;top:164px;width:1px;height:2px;background:#333"></div><div style="left:506px;top:164px;width:1px;height:2px;background:#333"></div><div style="left:514px;top:164px;width:1px;height:2px;background:#333"></div><div style="left:522px;top:164px;width:1px;height:2px;background:#333"></div><div style="left:530px;top:164px;width:1px;height:2px;background:#333"></div><div style="left:538px;top:164px;width:1px;height:2px;background:#333"></div><div style="left:546px;top:164px;width:1px;height:2px;background:#333"></div><div style="left:554px;top:161px;width:1px;height:5px;background:#333"></div><div style="left:562px;top:164px;width:1px;height:2px;background:#333"></div><div style="left:570px;top:164px;width:1px;height:2px;background:#333"></div><div style="left:578px;top:164px;width:1px;height:2px;background:#333"></div><div style="left:586px;top:164px;width:1px;height:2px;background:#333"></div><div style="left:594px;top:164px;width:1px;height:2px;background:#333"></div><div style="left:602px;top:164px;width:1px;height:2px;background:#333"></div><div style="left:610px;top:164px;width:1px;height:2px;background:#333"></div><div style="left:618px;top:164px;width:1px;height:2px;background:#333"></div>
<div class="t" style="left:386px;top:156.5px;font-size:7px;line-height:8px;height:8px;font-family:'Liberation Sans',sans-serif;color:#555;">10</div>
<div class="t" style="left:466px;top:156.5px;font-size:7px;line-height:8px;height:8px;font-family:'Liberation Sans',sans-serif;color:#555;">20</div>
<div class="t" style="left:546px;top:156.5px;font-size:7px;line-height:8px;height:8px;font-family:'Liberation Sans',sans-serif;color:#555;">30</div>
<div style="left:256px;top:167px;width:54px;height:562px;background:#f0f0f0"></div>
<div style="left:310px;top:167px;width:2px;height:562px;background:#fbfbfb"></div>
<div style="left:256px;top:167px;width:1px;height:562px;background:#dadada"></div>
<div style="left:312px;top:167px;width:310px;height:562px;background:#fff"></div>
<div style="left:312px;top:167px;width:310px;height:562px;overflow:hidden"><div class="t mono" style="left:2px;top:2px;font-size:16px;line-height:18px;height:18px"><svg class="r" width="8" height="18" viewBox="0 0 8 18"><path d="M6.5 6v5.5H1.2M3.5 9L1 11.5 3.5 14" stroke="#b0b0d4" stroke-width="1" fill="none"/></svg></div><div class="t mono" style="left:2px;top:20px;font-size:16px;line-height:18px;height:18px"><span class="c">-- 直近の5つを抽出</span><svg class="r" width="8" height="18" viewBox="0 0 8 18"><path d="M6.5 6v5.5H1.2M3.5 9L1 11.5 3.5 14" stroke="#b0b0d4" stroke-width="1" fill="none"/></svg></div><div class="t mono" style="left:2px;top:38px;font-size:16px;line-height:18px;height:18px"><svg class="r" width="8" height="18" viewBox="0 0 8 18"><path d="M6.5 6v5.5H1.2M3.5 9L1 11.5 3.5 14" stroke="#b0b0d4" stroke-width="1" fill="none"/></svg></div><div class="t mono" style="left:2px;top:56px;font-size:16px;line-height:18px;height:18px"><span class="c">-- 以下のSQLクエリを使用して、直近の5つのレコードを取得</span></div><div class="t mono" style="left:2px;top:74px;font-size:16px;line-height:18px;height:18px"><span class="c">-- </span><svg class="r" width="8" height="18" viewBox="0 0 8 18"><path d="M6.5 6v5.5H1.2M3.5 9L1 11.5 3.5 14" stroke="#b0b0d4" stroke-width="1" fill="none"/></svg></div><div class="t mono" style="left:2px;top:92px;font-size:16px;line-height:18px;height:18px"><svg class="r" width="8" height="18" viewBox="0 0 8 18"><path d="M6.5 6v5.5H1.2M3.5 9L1 11.5 3.5 14" stroke="#b0b0d4" stroke-width="1" fill="none"/></svg></div><div class="t mono" style="left:2px;top:110px;font-size:16px;line-height:18px;height:18px"><span class="k">SELECT</span> <span class="g">*</span><svg class="r" width="8" height="18" viewBox="0 0 8 18"><path d="M6.5 6v5.5H1.2M3.5 9L1 11.5 3.5 14" stroke="#b0b0d4" stroke-width="1" fill="none"/></svg></div><div class="t mono" style="left:2px;top:128px;font-size:16px;line-height:18px;height:18px"><span class="k">FROM</span> テーブル名<svg class="r" width="8" height="18" viewBox="0 0 8 18"><path d="M6.5 6v5.5H1.2M3.5 9L1 11.5 3.5 14" stroke="#b0b0d4" stroke-width="1" fill="none"/></svg></div><div class="t mono" style="left:2px;top:146px;font-size:16px;line-height:18px;height:18px"><span class="k">ORDER BY</span> 日付列 <span class="k">DESC</span><svg class="r" width="8" height="18" viewBox="0 0 8 18"><path d="M6.5 6v5.5H1.2M3.5 9L1 11.5 3.5 14" stroke="#b0b0d4" stroke-width="1" fill="none"/></svg></div><div class="t mono" style="left:2px;top:164px;font-size:16px;line-height:18px;height:18px"><span class="k">LIMIT</span> <span class="n">5</span>;<svg class="r" width="8" height="18" viewBox="0 0 8 18"><path d="M6.5 6v5.5H1.2M3.5 9L1 11.5 3.5 14" stroke="#b0b0d4" stroke-width="1" fill="none"/></svg></div><div class="t mono" style="left:2px;top:182px;font-size:16px;line-height:18px;height:18px"><svg class="r" width="8" height="18" viewBox="0 0 8 18"><path d="M6.5 6v5.5H1.2M3.5 9L1 11.5 3.5 14" stroke="#b0b0d4" stroke-width="1" fill="none"/></svg></div><div class="t mono" style="left:2px;top:200px;font-size:16px;line-height:18px;height:18px"><span class="c">-- </span><svg class="r" width="8" height="18" viewBox="0 0 8 18"><path d="M6.5 6v5.5H1.2M3.5 9L1 11.5 3.5 14" stroke="#b0b0d4" stroke-width="1" fill="none"/></svg></div><div class="t mono" style="left:2px;top:218px;font-size:16px;line-height:18px;height:18px"><span class="c">-- このクエリでは、指定したテーブルから日付列を降順</span></div></div>
<div class="ln" style="top:171px">1</div>
<div class="ln" style="top:189px">2</div>
<div class="ln" style="top:207px">3</div>
<div class="ln" style="top:225px">4</div>
<div class="ln" style="top:243px">5</div>
<div class="ln" style="top:261px">6</div>
<div class="ln" style="top:279px">7</div>
<div class="ln" style="top:297px">8</div>
<div class="ln" style="top:315px">9</div>
<div class="ln" style="top:333px">10</div>
<div class="ln" style="top:351px">11</div>
<div class="ln" style="top:369px">12</div>
<div class="ln" style="top:387px">13</div>
<div style="left:256px;top:729px;width:366px;height:1px;background:#fff"></div>
<div style="left:256px;top:730px;width:366px;height:16px;background:#f0f0f0"></div>
<div style="left:256px;top:746px;width:366px;height:1px;background:#fff"></div>
<div style="left:256px;top:729px;width:1px;height:18px;background:#fff"></div>
<svg style="left:263px;top:734px" width="6" height="9" viewBox="0 0 6 9"><path d="M5.5 0.5v8l-5-4z" fill="#9a9a9a"/></svg>
<div style="left:274px;top:737px;width:67px;height:2px;background:#8a8a8a;border-radius:1px"></div>
<div style="left:257px;top:747px;width:365px;height:1px;background:#858585"></div>
<div style="left:622px;top:157px;width:5px;height:591px;background:#e8d3d5"></div>
<div style="left:627px;top:157px;width:1px;height:591px;background:#fff"></div>
<div style="left:257px;top:156px;width:765px;height:1px;background:#fff"></div>
<div style="left:628px;top:157px;width:394px;height:591px;background:#e8d3d5"></div>
<div class="btn" style="left:639px;top:169px;width:279px;height:22px"></div>
<div class="t" style="left:694px;top:171px;font-size:12.5px;line-height:18px;height:18px;transform:scaleX(0.890);">AIと共有するテーブルを選択(T) ...</div>
<div style="left:843px;top:185px;width:6px;height:1px;background:#222"></div>
<svg style="left:931.5px;top:172.5px" width="16" height="16" viewBox="0 0 16 16"><rect x="1.5" y="4.5" width="9" height="10" rx="1" fill="#eee" stroke="#7a7a7a"/><rect x="4.5" y="1.5" width="9.5" height="11" rx="1" fill="#fafafa" stroke="#7a7a7a"/><path d="M6.5 4.5h5.5M6.5 7h5.5" stroke="#7a7a7a"/></svg>
<svg style="left:995px;top:175px" width="12" height="12" viewBox="0 0 16 16"><g transform="translate(8 8)"><rect x="-1.7" y="-7" width="3.4" height="4" rx="0.5" fill="#4a52b8" transform="rotate(0)"/><rect x="-1.7" y="-7" width="3.4" height="4" rx="0.5" fill="#4a52b8" transform="rotate(60)"/><rect x="-1.7" y="-7" width="3.4" height="4" rx="0.5" fill="#4a52b8" transform="rotate(120)"/><rect x="-1.7" y="-7" width="3.4" height="4" rx="0.5" fill="#4a52b8" transform="rotate(180)"/><rect x="-1.7" y="-7" width="3.4" height="4" rx="0.5" fill="#4a52b8" transform="rotate(240)"/><rect x="-1.7" y="-7" width="3.4" height="4" rx="0.5" fill="#4a52b8" transform="rotate(300)"/><circle r="4" fill="none" stroke="#4a52b8" stroke-width="2.6"/></g></svg>
<div class="t" style="left:637px;top:196.5px;font-size:13px;line-height:18px;height:18px;transform:scaleX(0.807);">スキーマ</div>
<div class="t" style="left:637px;top:235.5px;font-size:13px;line-height:18px;height:18px;transform:scaleX(0.856);">あなたからの質問</div>
<svg style="left:993px;top:233px" width="16" height="16" viewBox="0 0 16 16"><circle cx="8" cy="8" r="6.2" fill="#fff" stroke="#9a6a55" stroke-width="1.1"/><path d="M5 6l3 2.2 3.2-2.2" fill="none" stroke="#555" stroke-width="1.1"/><path d="M2.5 11.5l1.2 3.3 2.3-2.3z" fill="#b5522c"/></svg>
<div style="left:639px;top:258px;width:372px;height:154px;background:#fff;border-bottom:1px solid #8a8a8a"></div>
<div class="t mono" style="left:641px;top:259px;font-size:16px;line-height:18px;height:18px">直近の5つを抽出</div>
<div style="left:638px;top:415px;width:13px;height:13px;background:#f6f6f6;border:1px solid #5a5a5a;border-radius:3px"></div>
<div class="t" style="left:654px;top:412.5px;font-size:12.5px;line-height:18px;height:18px;transform:scaleX(0.989);">回答のみ要求(O)</div>
<div style="left:798px;top:415px;width:13px;height:13px;background:#1a67c0;border:1px solid #1a67c0;border-radius:3px"></div>
<svg style="left:798px;top:415px" width="13" height="13" viewBox="0 0 13 13"><path d="M3.3 6.8l2.3 2.3 4.2-4.6" fill="none" stroke="#fff" stroke-width="1.3"/></svg>
<div class="t" style="left:814px;top:412.5px;font-size:12.5px;line-height:18px;height:18px;transform:scaleX(0.954);">回答と説明を要求(D)</div>
<div style="left:1019px;top:415px;width:13px;height:13px;background:#f6f6f6;border:1px solid #555;border-radius:3px"></div>
<div class="btn" style="left:639px;top:444px;width:372px;height:22px"></div>
<svg style="left:762px;top:448px" width="14" height="14" viewBox="0 0 16 16"><rect x="1" y="3.5" width="14" height="2.2" fill="#9a9ad0"/><rect x="2.5" y="1.5" width="11" height="6" rx="2" fill="#c4c4f2" stroke="#8a8ab8" stroke-width="0.8"/><circle cx="6" cy="4.3" r="1" fill="#444"/><circle cx="10" cy="4.3" r="1" fill="#444"/><rect x="2.5" y="9" width="11" height="6" fill="#c4c4f2" stroke="#8a8ab8" stroke-width="0.8"/><rect x="5" y="10.5" width="6" height="2" fill="#e6e6fb" stroke="#9a9ac8" stroke-width="0.5"/></svg>
<div class="t" style="left:781px;top:446px;font-size:12.5px;line-height:18px;height:18px;transform:scaleX(0.954);">AIに質問(Ctrl+Enter)</div>
<div class="t" style="left:638px;top:479.5px;font-size:13px;line-height:18px;height:18px;transform:scaleX(0.878);">AI からの回答</div>
<div style="left:639px;top:500px;width:372px;height:194px;background:#fff"></div>
<div style="left:639px;top:500px;width:372px;height:194px;overflow:hidden"><div class="t mono" style="left:3px;top:2px;font-size:16px;line-height:18px;height:18px">以下のSQLクエリを使用して、直近の5つのレコード</div><div class="t mono" style="left:3px;top:20px;font-size:16px;line-height:18px;height:18px"><svg class="r" width="8" height="18" viewBox="0 0 8 18"><path d="M6.5 6v5.5H1.2M3.5 9L1 11.5 3.5 14" stroke="#b0b0d4" stroke-width="1" fill="none"/></svg></div><div class="t mono" style="left:3px;top:38px;font-size:16px;line-height:18px;height:18px">```<span class="k">sql</span><svg class="r" width="8" height="18" viewBox="0 0 8 18"><path d="M6.5 6v5.5H1.2M3.5 9L1 11.5 3.5 14" stroke="#b0b0d4" stroke-width="1" fill="none"/></svg></div><div class="t mono" style="left:3px;top:56px;font-size:16px;line-height:18px;height:18px"><span class="k">SELECT</span> <span class="g">*</span><svg class="r" width="8" height="18" viewBox="0 0 8 18"><path d="M6.5 6v5.5H1.2M3.5 9L1 11.5 3.5 14" stroke="#b0b0d4" stroke-width="1" fill="none"/></svg></div><div class="t mono" style="left:3px;top:74px;font-size:16px;line-height:18px;height:18px"><span class="k">FROM</span> テーブル名<svg class="r" width="8" height="18" viewBox="0 0 8 18"><path d="M6.5 6v5.5H1.2M3.5 9L1 11.5 3.5 14" stroke="#b0b0d4" stroke-width="1" fill="none"/></svg></div><div class="t mono" style="left:3px;top:92px;font-size:16px;line-height:18px;height:18px"><span class="k">ORDER BY</span> 日付列 <span class="k">DESC</span><svg class="r" width="8" height="18" viewBox="0 0 8 18"><path d="M6.5 6v5.5H1.2M3.5 9L1 11.5 3.5 14" stroke="#b0b0d4" stroke-width="1" fill="none"/></svg></div><div class="t mono" style="left:3px;top:110px;font-size:16px;line-height:18px;height:18px"><span class="k">LIMIT</span> <span class="n">5</span>;<svg class="r" width="8" height="18" viewBox="0 0 8 18"><path d="M6.5 6v5.5H1.2M3.5 9L1 11.5 3.5 14" stroke="#b0b0d4" stroke-width="1" fill="none"/></svg></div><div class="t mono" style="left:3px;top:128px;font-size:16px;line-height:18px;height:18px">```<svg class="r" width="8" height="18" viewBox="0 0 8 18"><path d="M6.5 6v5.5H1.2M3.5 9L1 11.5 3.5 14" stroke="#b0b0d4" stroke-width="1" fill="none"/></svg></div><div class="t mono" style="left:3px;top:146px;font-size:16px;line-height:18px;height:18px"><svg class="r" width="8" height="18" viewBox="0 0 8 18"><path d="M6.5 6v5.5H1.2M3.5 9L1 11.5 3.5 14" stroke="#b0b0d4" stroke-width="1" fill="none"/></svg></div><div class="t mono" style="left:3px;top:164px;font-size:16px;line-height:18px;height:18px">このクエリでは、指定したテーブルから日付列を降</div></div>
<div style="left:639px;top:694px;width:372px;height:17px;background:#f0f0f0"></div>
<svg style="left:645px;top:698px" width="6" height="9" viewBox="0 0 6 9"><path d="M5.5 0.5v8l-5-4z" fill="#9a9a9a"/></svg>
<div style="left:657px;top:701px;width:83px;height:2px;background:#8a8a8a;border-radius:1px"></div>
<div style="left:639px;top:711px;width:372px;height:1px;background:#c4bebe"></div>
<div style="left:627px;top:747px;width:395px;height:1px;background:#8c8c8c"></div>
<div class="btn" style="left:639px;top:713px;width:141px;height:23px;border:1px solid #2a7ad8;border-radius:4px"><div style="left:1px;top:1px;width:137px;height:19px;border:1px dotted #111;border-radius:3px"></div></div>
<svg style="left:654px;top:718px" width="15" height="14" viewBox="0 0 15 14"><path d="M1 7l6.5-6v3.5h6.5v5H7.5V13z" fill="#22e822" stroke="#1a8a1a" stroke-width="0.8"/></svg>
<div class="t" style="left:673px;top:715.5px;font-size:12.5px;line-height:18px;height:18px;transform:scaleX(0.842);">SQLエディタに追記</div>
<div class="btn" style="left:800px;top:714px;width:118px;height:22px"></div>
<svg style="left:839px;top:717px" width="10" height="15" viewBox="0 0 10 15"><path d="M1 1v13l7-6.5z" fill="#22ea22" stroke="#4a9a4a" stroke-width="0.7"/></svg>
<div class="t" style="left:857px;top:715.5px;font-size:13px;line-height:18px;height:18px;">実行</div>
<div class="btn" style="left:936px;top:714px;width:100px;height:22px"></div>
<svg style="left:970px;top:717px" width="16" height="16" viewBox="0 0 16 16"><rect x="1.5" y="4.5" width="9" height="10" rx="1" fill="#eee" stroke="#888"/><rect x="4.5" y="1.5" width="9.5" height="11" rx="1" fill="#fafafa" stroke="#888"/><path d="M6.5 4.5h5.5M6.5 7h5.5" stroke="#777"/></svg>
<div class="t" style="left:989px;top:715.5px;font-size:13px;line-height:18px;height:18px;transform:scaleX(0.871);">コピー</div>
<div style="left:1022px;top:31px;width:2px;height:737px;background:#e8d3d5"></div>
<div style="left:1022px;top:8px;width:1px;height:752px;background:#b9b3b4"></div>
<div style="left:1010px;top:763px;width:2px;height:2px;background:#b8b8b8"></div>
<div style="left:1014px;top:763px;width:2px;height:2px;background:#b8b8b8"></div>
<div style="left:1018px;top:763px;width:2px;height:2px;background:#b8b8b8"></div>
<div style="left:1014px;top:759px;width:2px;height:2px;background:#b8b8b8"></div>
<div style="left:1018px;top:759px;width:2px;height:2px;background:#b8b8b8"></div>
<div style="left:1018px;top:755px;width:2px;height:2px;background:#b8b8b8"></div>
<div style="left:0;top:0;width:1024px;height:768px;border:1px solid #a6a6a6;border-bottom-color:#8a8a8a;border-right-color:#8e8e8e;border-radius:8px;box-shadow:0 0 0 8px #d4d4d4"></div>
</div>
</body>
</html>
